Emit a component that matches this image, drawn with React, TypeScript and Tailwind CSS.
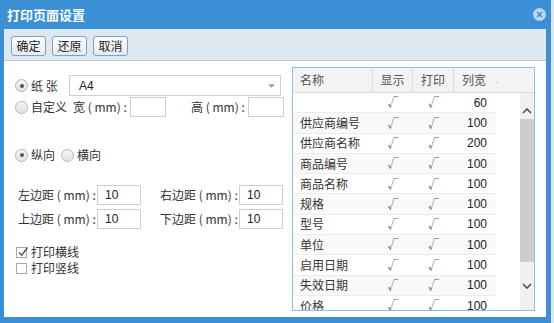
import React from "react";

const cjk = { fontFamily: '"Noto Sans CJK SC", "Liberation Sans", sans-serif' };
const num = { fontFamily: '"Liberation Sans", "Noto Sans CJK SC", sans-serif' };

const rows: { name: string; width: number }[] = [
  { name: "", width: 60 },
  { name: "供应商编号", width: 100 },
  { name: "供应商名称", width: 200 },
  { name: "商品编号", width: 100 },
  { name: "商品名称", width: 100 },
  { name: "规格", width: 100 },
  { name: "型号", width: 100 },
  { name: "单位", width: 100 },
  { name: "启用日期", width: 100 },
  { name: "失效日期", width: 100 },
  { name: "价格", width: 100 },
];

function Radio({ checked }: { checked?: boolean }) {
  return (
    <span className="flex h-[13px] w-[13px] shrink-0 items-center justify-center rounded-full border border-[#b5b5b5] bg-gradient-to-b from-[#f4f4f4] to-[#e2e2e2]">
      {checked && <span className="h-[4px] w-[4px] rounded-full bg-[#555]" />}
    </span>
  );
}

function Checkbox({ checked }: { checked?: boolean }) {
  return (
    <span className="relative flex h-[11px] w-[11px] shrink-0 items-center justify-center border border-[#a8a8a8] bg-white">
      {checked && (
        <svg viewBox="0 0 12 12" className="absolute -top-[2px] left-0 h-[12px] w-[12px]">
          <path d="M2 6.5 L4.8 9.2 L10.5 1.5" fill="none" stroke="#555" strokeWidth="1.4" />
        </svg>
      )}
    </span>
  );
}

function Button({ label }: { label: string }) {
  return (
    <button
      className="h-[20px] w-[35px] rounded-[3px] border border-[#7d9fc4] bg-gradient-to-b from-[#ffffff] to-[#e4ebf2] text-[12px] leading-none text-[#222]"
      style={cjk}
    >
      {label}
    </button>
  );
}

function TextInput({ value, w }: { value?: string; w: string }) {
  return (
    <div
      className={`${w} flex h-[20px] items-center border border-[#cfcfcf] bg-white pl-[7px] text-[12px] text-[#222]`}
      style={num}
    >
      {value}
    </div>
  );
}

export default function App() {
  return (
    <div className="h-[323px] w-[554px] overflow-hidden bg-[#e4e4e4]">
      <div className="flex h-[323px] w-[551px] flex-col bg-[#3a8fd5]">
        {/* title bar */}
        <div className="flex h-[29px] shrink-0 items-center justify-between pl-[7px] pr-[5px]">
          <span className="text-[13px] font-bold text-white" style={cjk}>
            打印页面设置
          </span>
          <span className="flex h-[13px] w-[13px] items-center justify-center rounded-full bg-[#bcd8f1]">
            <svg viewBox="0 0 10 10" className="h-[7px] w-[7px]">
              <path d="M1.5 1.5 L8.5 8.5 M8.5 1.5 L1.5 8.5" stroke="#3a8fd5" strokeWidth="2" />
            </svg>
          </span>
        </div>

        <div className="mb-[6px] ml-[4px] mr-[5px] flex flex-1 flex-col bg-white">
          {/* toolbar */}
          <div className="flex h-[32px] shrink-0 items-center gap-[6px] border-b border-[#c3c9cf] bg-[#dfe8f1] pl-[7px] pt-[2px]">
            <Button label="确定" />
            <Button label="还原" />
            <Button label="取消" />
          </div>

          <div className="flex flex-1">
            {/* left settings */}
            <div className="flex w-[288px] shrink-0 flex-col pl-[11px] text-[12px] text-[#333]" style={cjk}>
              <div className="mt-[14px] flex h-[21px] items-center">
                <Radio checked />
                <span className="ml-[3px] w-[38px]">纸 张</span>
                <div
                  className="flex h-[21px] w-[212px] items-center justify-between border border-[#cfcfcf] pl-[9px] pr-[5px] text-[#222]"
                  style={num}
                >
                  <span>A4</span>
                  <svg viewBox="0 0 8 4" className="h-[4px] w-[7px]">
                    <path d="M0 0 L8 0 L4 4 Z" fill="#999" />
                  </svg>
                </div>
              </div>

              <div className="mt-[1px] flex h-[20px] items-center">
                <Radio />
                <span className="ml-[3px] w-[42px]">自定义</span>
                <span className="w-[57px]">宽 ( mm) :</span>
                <TextInput w="w-[36px]" />
                <span className="ml-[25px] w-[57px]">高 ( mm) :</span>
                <TextInput w="w-[36px]" />
              </div>

              <div className="mt-[30px] flex h-[16px] items-center">
                <Radio checked />
                <span className="ml-[3px] w-[30px]">纵向</span>
                <Radio />
                <span className="ml-[3px]">横向</span>
              </div>

              <div className="mt-[22px] flex flex-col gap-[4px] pl-[3px]">
                <div className="flex h-[20px] items-center">
                  <span className="w-[79px]">左边距 ( mm) :</span>
                  <TextInput value="10" w="w-[44px]" />
                  <span className="ml-[19px] w-[79px]">右边距 ( mm) :</span>
                  <TextInput value="10" w="w-[44px]" />
                </div>
                <div className="flex h-[20px] items-center">
                  <span className="w-[79px]">上边距 ( mm) :</span>
                  <TextInput value="10" w="w-[44px]" />
                  <span className="ml-[19px] w-[79px]">下边距 ( mm) :</span>
                  <TextInput value="10" w="w-[44px]" />
                </div>
              </div>

              <div className="mt-[15px] flex flex-col pl-[1px]">
                <div className="flex h-[16px] items-center">
                  <Checkbox checked />
                  <span className="ml-[4px]">打印横线</span>
                </div>
                <div className="flex h-[16px] items-center">
                  <Checkbox />
                  <span className="ml-[4px]">打印竖线</span>
                </div>
              </div>
            </div>

            {/* column table */}
            <div className="mt-[6px] flex h-[244px] w-[243px] flex-col border border-[#8dbde9] text-[12px]" style={cjk}>
              <div className="flex h-[25px] shrink-0 items-center border-b border-[#dcdcdc] bg-[#f3f3f3] text-[#555]">
                <div className="flex h-full w-[80px] items-center border-r border-[#dcdcdc] pl-[7px]">名称</div>
                <div className="flex h-full w-[40px] items-center justify-center border-r border-[#dcdcdc]">显示</div>
                <div className="flex h-full w-[41px] items-center justify-center border-r border-[#dcdcdc]">打印</div>
                <div className="flex h-full flex-1 items-center pl-[8px]">
                  列宽<span className="ml-[10px] text-[8px] text-[#999]">.</span>
                </div>
              </div>

              <div className="flex flex-1 overflow-hidden">
                <div className="flex w-[203px] flex-col">
                  {rows.map((r, i) => (
                    <div
                      key={i}
                      className={`flex h-[20.3px] shrink-0 items-center border-b border-[#ececec] text-[#333] ${
                        i % 2 === 1 ? "bg-[#f9f9f9]" : "bg-white"
                      }`}
                    >
                      <div className="w-[80px] pl-[7px]">{r.name}</div>
                      <div className="w-[40px] text-center text-[11px] text-[#555]">√</div>
                      <div className="w-[41px] text-center text-[11px] text-[#555]">√</div>
                      <div className="flex-1 pr-[9px] text-right text-[#222]" style={num}>
                        {r.width}
                      </div>
                    </div>
                  ))}
                </div>
                <div className="flex-1" />
                {/* scrollbar */}
                <div className="flex w-[14px] flex-col bg-[#f0f0f0]">
                  <div className="flex h-[26px] items-end justify-center pb-[5px]">
                    <svg viewBox="0 0 10 6" className="h-[6px] w-[10px]">
                      <path d="M1 5 L5 1 L9 5" fill="none" stroke="#505050" strokeWidth="1.6" />
                    </svg>
                  </div>
                  <div className="h-[143px] bg-[#cdcdcd]" />
                  <div className="flex flex-1 items-center justify-center">
                    <svg viewBox="0 0 10 6" className="h-[6px] w-[10px]">
                      <path d="M1 1 L5 5 L9 1" fill="none" stroke="#505050" strokeWidth="1.6" />
                    </svg>
                  </div>
                </div>
              </div>
            </div>
          </div>
        </div>
      </div>
    </div>
  );
}
